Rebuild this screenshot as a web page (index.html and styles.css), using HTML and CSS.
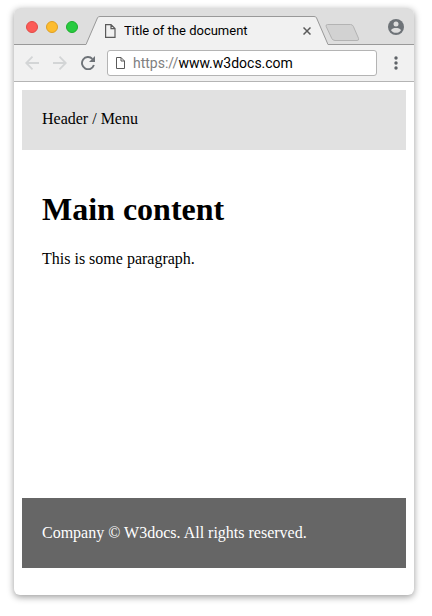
FILE: index.html
```html
<!DOCTYPE html>
<html lang="en">
<head>
<meta charset="utf-8">
<title>Title of the document</title>
<link rel="stylesheet" href="styles.css">
</head>
<body>
<div class="window">
  <div class="tab-strip">
    <div class="controls">
      <button class="dot close" aria-label="Close window"></button>
      <button class="dot minimize" aria-label="Minimize window"></button>
      <button class="dot maximize" aria-label="Maximize window"></button>
    </div>
    <div class="tab">
      <svg class="slope" width="14" height="29" viewBox="0 0 14 29" aria-hidden="true">
        <path d="M0 28.5 12 1.5Q12.5.5 14 .5V29H0z" fill="#f1f1f1"/>
        <path d="M0 28.5 11.5 1.8Q12 .5 14 .5" fill="none" stroke="#999"/>
      </svg>
      <div class="tab-body">
        <svg width="11" height="14" viewBox="0 0 11 14" fill="none" stroke="#5a5a5a" aria-hidden="true">
          <path d="M.6.6h5.400l4 4v8.800H.6zM6 .6v4h4" stroke-width="1.200"/>
        </svg>
        <span class="tab-title">Title of the document</span>
        <button class="icon-button" aria-label="Close tab">
          <svg width="8" height="8" viewBox="0 0 8 8" stroke="#5a5a5a" stroke-width="1.500"><path d="M.5.5l7 7M7.500.5l-7 7"/></svg>
        </button>
      </div>
      <svg class="slope" width="14" height="29" viewBox="0 0 14 29" aria-hidden="true">
        <path d="M14 28.500 2 1.500Q1.500.5 0 .5V29H14z" fill="#f1f1f1"/>
        <path d="M14 28.500 2.500 1.800Q2 .5 0 .5" fill="none" stroke="#999"/>
      </svg>
    </div>
    <div class="strip-end">
      <button class="icon-button" aria-label="New tab">
        <svg width="35" height="17" viewBox="0 0 35 17"><path d="M2.500.5h23q2 0 2.800 1.800l5.200 12q.8 2.200-1.500 2.200H10q-2.200 0-3.200-2L1.200 2.500Q.5.500 2.500.5z" fill="#d2d2d2" stroke="#b3b3b3"/></svg>
      </button>
      <button class="icon-button" aria-label="Profile">
        <svg width="16" height="16" viewBox="0 0 16 16"><circle cx="8" cy="8" r="8" fill="#6e7378"/><circle cx="8" cy="5" r="2.500" fill="#dedede"/><path d="M3 11.200C3.500 9.600 6 9 8 9s4.500.6 5 2.200C12 12.800 10 13.800 8 13.800S4 12.800 3 11.200z" fill="#dedede"/></svg>
      </button>
    </div>
  </div>
  <div class="toolbar">
    <div class="nav">
      <button class="icon-button" aria-label="Back">
        <svg width="14" height="14" viewBox="0 0 14 14" fill="none" stroke="#d3d5d6" stroke-width="1.800"><path d="M14 7H1.500M7.500.7 1.200 7l6.300 6.300"/></svg>
      </button>
      <button class="icon-button" aria-label="Forward">
        <svg width="14" height="14" viewBox="0 0 14 14" fill="none" stroke="#d3d5d6" stroke-width="1.800"><path d="M0 7h12.500M6.500.7 12.800 7l-6.300 6.300"/></svg>
      </button>
      <button class="icon-button" aria-label="Reload">
        <svg width="14" height="14" viewBox="0 0 14 14"><path d="M12.900 9A6.100 6.100 0 1 1 11.400 2.800" fill="none" stroke="#6e7378" stroke-width="1.900"/><path d="M14 0v6H8z" fill="#6e7378"/></svg>
      </button>
    </div>
    <div class="address">
      <svg width="9" height="12" viewBox="0 0 9 12" fill="none" stroke="#5a5a5a" aria-hidden="true"><path d="M.5.500H5l3.500 3.500v7.500H.5zM5 .5V4h3.500"/></svg>
      <label class="scheme" for="url">https://</label>
      <input class="url" id="url" type="text" value="www.w3docs.com" spellcheck="false">
    </div>
    <button class="icon-button" aria-label="Browser menu">
      <svg width="4" height="14" viewBox="0 0 4 14" fill="#5f6368"><circle cx="2" cy="2" r="1.700"/><circle cx="2" cy="7" r="1.700"/><circle cx="2" cy="12" r="1.700"/></svg>
    </button>
  </div>
  <div class="page">
    <header class="page-header">Header / Menu</header>
    <main class="content">
      <h1>Main content</h1>
      <p>This is some paragraph.</p>
    </main>
    <footer class="page-footer">Company © W3docs. All rights reserved.</footer>
  </div>
</div>
</body>
</html>
```
FILE: styles.css
```css
* {
  box-sizing: border-box;
}

body {
  margin: 0;
  padding: 8px 18px 21px 14px;
  min-height: 100vh;
  display: flex;
  background: #fff;
  color: #000;
  font-family: "Liberation Serif", "Times New Roman", serif;
  font-size: 16px;
}

button {
  padding: 0;
  border: 0;
  background: none;
}

svg {
  display: block;
  flex: none;
}

.window {
  flex: 1;
  min-width: 0;
  display: flex;
  flex-direction: column;
  border-radius: 6px;
  background: #fff;
  box-shadow: 0 2px 7px rgba(0, 0, 0, 0.4);
}

.tab-strip {
  display: flex;
  align-items: flex-end;
  height: 37px;
  border-radius: 6px 6px 0 0;
  background: #dedede;
  font-family: Roboto, sans-serif;
}

.controls {
  display: flex;
  align-items: center;
  gap: 8px;
  height: 37px;
  padding: 2px 8px 0 12px;
  border-bottom: 1px solid #999;
}

.dot {
  width: 12px;
  height: 12px;
  border: 1px solid;
  border-radius: 50%;
}

.close {
  background: #fc5b57;
  border-color: #e24b47;
}

.minimize {
  background: #fdbc2e;
  border-color: #dfa023;
}

.maximize {
  background: #28cb40;
  border-color: #1dad2c;
}

.tab {
  flex: 1;
  min-width: 0;
  display: flex;
}

.tab-body {
  flex: 1;
  min-width: 0;
  display: flex;
  align-items: center;
  height: 29px;
  padding: 0 3px 0 5px;
  border-top: 1px solid #999;
  background: #f1f1f1;
}

.tab-title {
  flex: 1;
  min-width: 0;
  margin-left: 8px;
  overflow: hidden;
  white-space: nowrap;
  font-size: 13px;
  line-height: 16px;
}

.strip-end {
  display: flex;
  align-items: center;
  justify-content: space-between;
  width: 86px;
  height: 37px;
  padding: 2px 10px 0 0;
  border-bottom: 1px solid #999;
}

.strip-end .icon-button:first-child {
  padding-top: 10px;
  margin-left: -3px;
}

.toolbar {
  display: flex;
  align-items: center;
  height: 37px;
  padding: 0 16px 0 11px;
  border-bottom: 1px solid #b4b4b4;
  background: #f1f1f1;
}

.nav {
  display: flex;
  gap: 14px;
  margin-right: 12px;
}

.address {
  flex: 1;
  min-width: 0;
  display: flex;
  align-items: center;
  height: 26px;
  margin-right: 17px;
  padding: 0 8px;
  border: 1px solid #b4b4b4;
  border-radius: 3px;
  background: #fff;
  font-family: Roboto, sans-serif;
  font-size: 14px;
}

.scheme {
  margin-left: 8px;
  color: #808080;
}

.url {
  flex: 1;
  min-width: 0;
  padding: 0;
  border: 0;
  outline: 0;
  background: none;
  color: #000;
  font: inherit;
}

.page {
  flex: 1;
  display: flex;
  flex-direction: column;
  padding: 8px 8px 27px;
}

.page-header {
  padding: 19px 20px 21px;
  background: #e1e1e1;
  line-height: 20px;
}

.content {
  flex: 1;
  padding: 19px 20px;
}

h1 {
  margin: 20px 0;
  font-size: 32px;
  line-height: 40px;
}

p {
  margin: 0;
  line-height: 20px;
}

.page-footer {
  padding: 25px 20px;
  background: #666;
  color: #fff;
  line-height: 20px;
}
```
